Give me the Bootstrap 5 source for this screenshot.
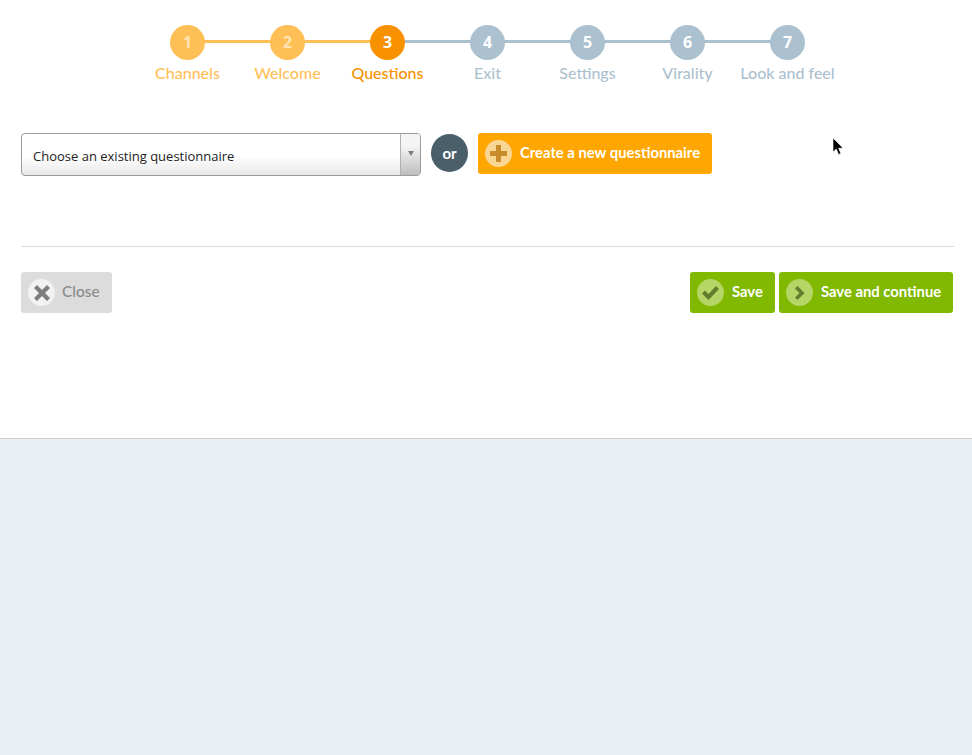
<!DOCTYPE html>
<html lang="en">
<head>
<meta charset="utf-8">
<title>Questions</title>
<link href="https://cdn.jsdelivr.net/npm/bootstrap@5.3.0/dist/css/bootstrap.min.css" rel="stylesheet">
<style>
body { background: #e9f0f3; font-family: "Lato", "Liberation Sans", sans-serif; position: relative; }
.top-panel { background: #fff; height: 439px; border-bottom: 1px solid #ccd0d2; padding: 25px 18px 0 21px; }
.steps { list-style: none; margin: 0 0 51px; padding: 0; }
.step-item { width: 100px; position: relative; text-align: center; color: #acc1d0; }
.step-item:not(:last-child)::after { content: ""; position: absolute; left: 50%; width: 100%; top: 15px; height: 3px; background: #acc1d0; }
.step-item.done { color: #ffbf57; }
.step-item.done::after { background: #ffbf57; }
.step-item.current { color: #f79100; }
.step-num { position: relative; z-index: 1; width: 35px; height: 35px; border-radius: 50%; margin: 0 auto 4px; background: #acc1d0; color: #fff; font: 700 16px/34px "Open Sans", sans-serif; }
.done .step-num { background: #ffbf57; color: #ffe3b5; }
.current .step-num { background: #f79100; color: #fff; }
.step-label { font-size: 16px; line-height: 18px; font-weight: 500; white-space: nowrap; margin: 0 -10px; }
.choose-row { height: 43px; }
.fake-select { width: 400px; height: 43px; border: 1px solid #9b9b9b; border-radius: 4px; background: linear-gradient(#fff 55%, #e8e8e8); font: 13px/44px "Open Sans", sans-serif; color: #222; padding-left: 11px; }
.fake-arrow { width: 20px; border-left: 1px solid #b0b0b0; background: linear-gradient(#f4f4f4 30%, #bdbdbd); border-radius: 0 3px 3px 0; }
.fake-arrow i { width: 0; height: 0; border: 3.5px solid transparent; border-top: 5px solid #7d7d7d; border-bottom: 0; display: block; margin-top: -2px; }
.or-disc { width: 37px; height: 38px; border-radius: 50%; background: #4b5f6b; color: #fff; font-size: 15px; font-weight: 700; margin: 1px 10px 0; }
.act-btn { height: 41px; border: 0; border-radius: 3px; color: #fff; font-size: 14.8px; font-weight: 700; padding: 0 11px 0 7px; gap: 8px; white-space: nowrap; }
.act-btn:hover, .act-btn:disabled { color: #fff; }
.btn-caption { position: relative; top: -1px; }
.act-orange { background: #ffa600; width: 234px; }
.act-orange:hover { background: #ffa600; }
.act-green { background: #80b900; }
.act-green:hover { background: #80b900; }
.act-grey { background: #dcdcdc; color: #8b8b8b; font-size: 15.5px; font-weight: 500; width: 91px; gap: 7px; }
.act-grey:hover { color: #8b8b8b; background: #dcdcdc; }
.act-save { width: 85px; }
.act-continue { width: 174px; }
.ico-disc { width: 27px; height: 27px; border-radius: 50%; flex: none; }
.act-orange .ico-disc { background: #fad694; }
.act-green .ico-disc { background: #b5d566; }
.act-grey .ico-disc { background: #f2f2f2; }
.act-group { margin-right: 1px; }
.divider { margin: 70px 0 25px; border: 0; border-top: 1px solid #dcdcdc; opacity: 1; }
.pointer-mark { position: absolute; left: 832px; top: 137px; }
</style>
</head>
<body>
<div class="top-panel">
  <ol class="steps d-flex justify-content-center">
    <li class="step-item done"><div class="step-num">1</div><div class="step-label">Channels</div></li>
    <li class="step-item done"><div class="step-num">2</div><div class="step-label">Welcome</div></li>
    <li class="step-item current"><div class="step-num">3</div><div class="step-label">Questions</div></li>
    <li class="step-item"><div class="step-num">4</div><div class="step-label">Exit</div></li>
    <li class="step-item"><div class="step-num">5</div><div class="step-label">Settings</div></li>
    <li class="step-item"><div class="step-num">6</div><div class="step-label">Virality</div></li>
    <li class="step-item"><div class="step-num">7</div><div class="step-label">Look and feel</div></li>
  </ol>
  <div class="d-flex align-items-start choose-row">
    <div class="fake-select d-flex justify-content-between">
      <span>Choose an existing questionnaire</span>
      <span class="fake-arrow d-flex align-items-center justify-content-center"><i></i></span>
    </div>
    <div class="or-disc d-flex align-items-center justify-content-center">or</div>
    <button class="btn act-btn act-orange d-flex align-items-center" type="button">
      <span class="ico-disc d-flex align-items-center justify-content-center">
        <svg width="19" height="19" viewBox="0 0 19 19"><path d="M7 1h5v6h6v5h-6v6H7v-6H1V7h6z" fill="#c88c2d"/></svg>
      </span>
      <span class="btn-caption">Create a new questionnaire</span>
    </button>
  </div>
  <hr class="divider">
  <div class="d-flex justify-content-between">
    <button class="btn act-btn act-grey d-flex align-items-center" type="button">
      <span class="ico-disc d-flex align-items-center justify-content-center">
        <svg width="18" height="18" viewBox="0 0 18 18"><path d="M4 1l5 5 5-5 3 3-5 5 5 5-3 3-5-5-5 5-3-3 5-5-5-5z" fill="#7d7d7d"/></svg>
      </span>
      <span class="btn-caption">Close</span>
    </button>
    <div class="d-flex gap-1 act-group">
      <button class="btn act-btn act-green act-save d-flex align-items-center" type="button">
        <span class="ico-disc d-flex align-items-center justify-content-center">
          <svg width="19" height="16" viewBox="0 0 19 16"><path d="M1 8.500l3-3 3.500 3.500L15 1l3 3L7.500 15z" fill="#5f7f2c"/></svg>
        </span>
        <span class="btn-caption">Save</span>
      </button>
      <button class="btn act-btn act-green act-continue d-flex align-items-center" type="button">
        <span class="ico-disc d-flex align-items-center justify-content-center">
          <svg width="12" height="14" viewBox="0 0 12 14"><path d="M3.500 0l7 7-7 7L1 11.500 5.500 7 1 2.500z" fill="#5f7f2c"/></svg>
        </span>
        <span class="btn-caption">Save and continue</span>
      </button>
    </div>
  </div>
</div>
<svg class="pointer-mark" width="12" height="19" viewBox="0 0 12 19"><path d="M1 1v14l3.300-3 2.300 5.500 2.300-1-2.300-5.200 4.400-.3z" fill="#000" stroke="#fff" stroke-width=".6"/></svg>
<script src="https://cdn.jsdelivr.net/npm/bootstrap@5.3.0/dist/js/bootstrap.bundle.min.js"></script>
</body>
</html>
